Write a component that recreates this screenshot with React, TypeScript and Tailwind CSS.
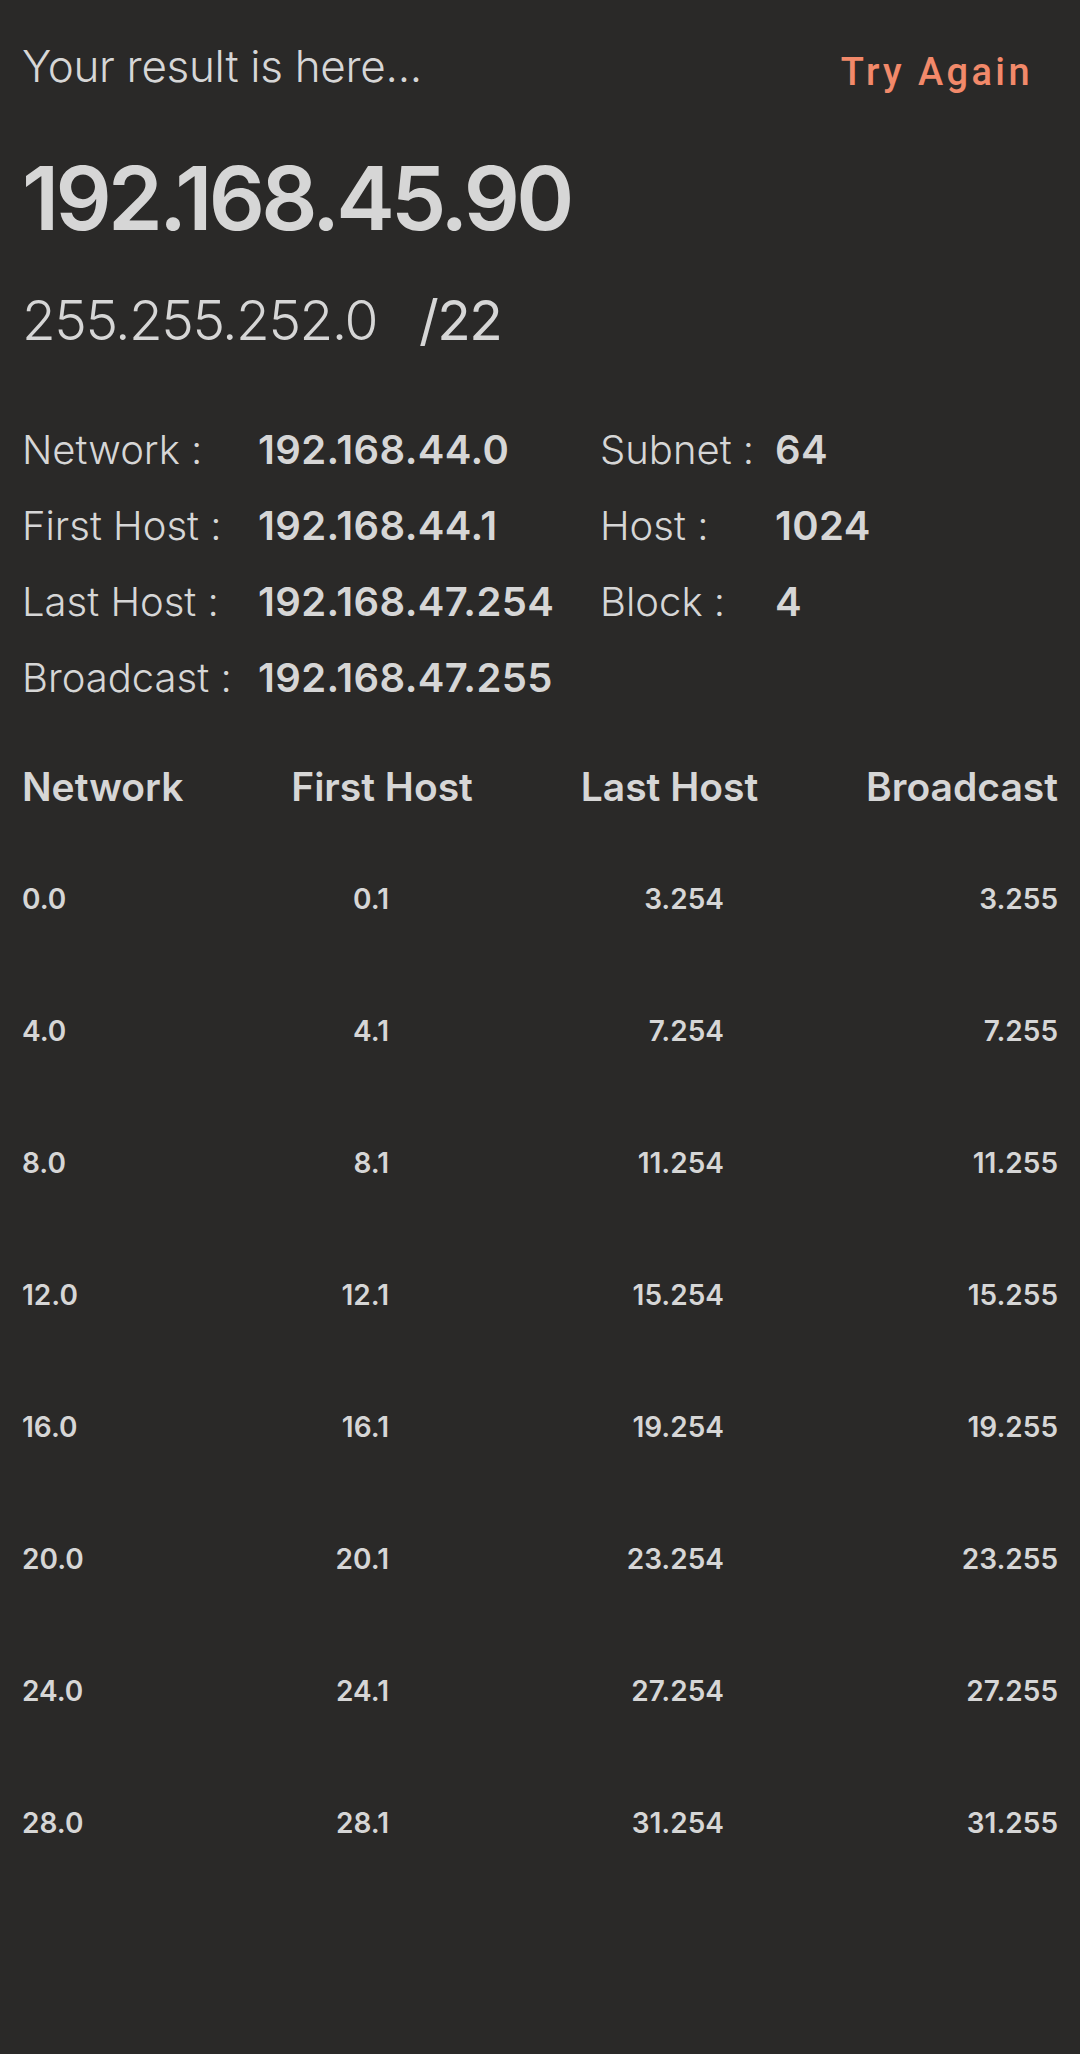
import React from 'react';

const info = [
  { label: 'Network :', value: '192.168.44.0', label2: 'Subnet :', value2: '64' },
  { label: 'First Host :', value: '192.168.44.1', label2: 'Host :', value2: '1024' },
  { label: 'Last Host :', value: '192.168.47.254', label2: 'Block :', value2: '4' },
  { label: 'Broadcast :', value: '192.168.47.255', label2: '', value2: '' },
];

const rows = [0, 4, 8, 12, 16, 20, 24, 28].map(n => ({
  network: `${n}.0`,
  first: `${n}.1`,
  last: `${n + 3}.254`,
  broadcast: `${n + 3}.255`,
}));

const App = () => {
  return (
    <div
      className="min-h-[2054px] w-full bg-[#2a2928] text-[#d6d6d6]"
      style={{ fontFamily: 'Inter, "Noto Sans", sans-serif' }}
    >
      <div className="px-[22px] pt-[44px]">
        <div className="flex items-start justify-between">
          <div className="text-[44px] font-light leading-none tracking-[-0.3px]">Your result is here...</div>
          <button
            className="mr-[25px] mt-[9px] text-[38px] font-medium leading-none tracking-[3.4px] text-[#f2896a]"
            style={{ fontFamily: 'Roboto, sans-serif' }}
          >
            Try Again
          </button>
        </div>

        <div className="mt-[63px] text-[88px] font-semibold leading-none tracking-[-3.8px]">192.168.45.90</div>

        <div className="mt-[51px] flex items-baseline text-[55px] leading-none tracking-[-1.5px]">
          <span className="font-light">255.255.252.0</span>
          <span className="ml-[42px] font-normal">/22</span>
        </div>

        <div className="mt-[64px] text-[40px] leading-[76px]">
          {info.map(r => (
            <div key={r.label} className="flex">
              <div className="w-[236px] font-light">{r.label}</div>
              <div className="w-[342px] font-semibold tracking-[0.4px]">{r.value}</div>
              <div className="w-[175px] font-light">{r.label2}</div>
              <div className="font-semibold tracking-[0.4px]">{r.value2}</div>
            </div>
          ))}
        </div>

        <div className="mt-[51px] flex justify-between text-[39px] font-semibold leading-none">
          <span>Network</span>
          <span>First Host</span>
          <span>Last Host</span>
          <span>Broadcast</span>
        </div>

        <div className="mt-[27px] text-[28px] font-semibold leading-[132px]">
          {rows.map(r => (
            <div key={r.network} className="flex">
              <div className="w-[200px]">{r.network}</div>
              <div className="w-[167px] text-right">{r.first}</div>
              <div className="w-[335px] text-right">{r.last}</div>
              <div className="w-[334px] text-right">{r.broadcast}</div>
            </div>
          ))}
        </div>
      </div>
    </div>
  );
};

export default App;
